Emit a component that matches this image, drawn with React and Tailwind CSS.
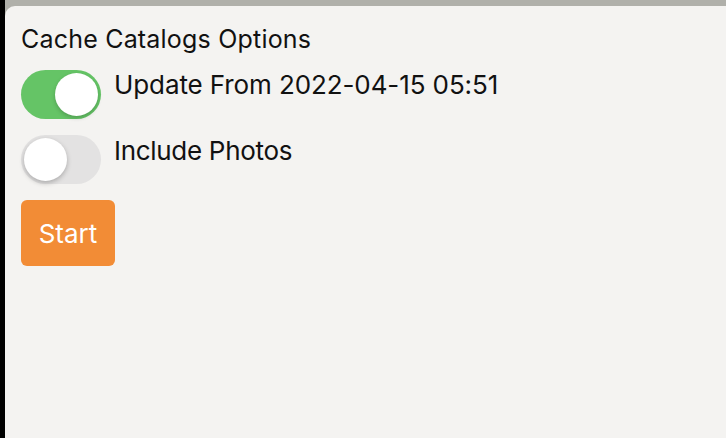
export default function App() {
  return (
    <div className="w-[726px] h-[438px] bg-black flex overflow-hidden" style={{ fontFamily: 'Inter, "Liberation Sans", sans-serif' }}>
      <div className="w-[5px] shrink-0" />
      <div className="flex-1 flex flex-col bg-[#b0b0aa]">
        <div className="h-[6px] shrink-0" />
        <div className="flex-1 bg-[#f4f3f1] rounded-tl-[10px] pl-[16px] pt-[18px] flex flex-col text-[#111]">
          <div className="text-[25px] leading-[30px] tracking-[0.2px]">Cache Catalogs Options</div>
          <div className="flex items-start mt-[16px]">
            <div className="w-[80px] h-[49px] rounded-full bg-[#65c466] p-[3px] flex justify-end">
              <div className="w-[43px] h-[43px] rounded-full bg-white shadow-[0_2px_4px_rgba(0,0,0,0.2)]" />
            </div>
            <div className="ml-[13px] text-[26px] leading-[32px] -mt-[1px] tracking-[-0.1px]">Update From 2022-04-15 05:51</div>
          </div>
          <div className="flex items-start mt-[16px]">
            <div className="w-[80px] h-[49px] rounded-full bg-[#e3e2e2] p-[3px] flex justify-start">
              <div className="w-[43px] h-[43px] rounded-full bg-white shadow-[0_2px_5px_rgba(0,0,0,0.25)]" />
            </div>
            <div className="ml-[13px] text-[26px] leading-[32px] tracking-[-0.3px]">Include Photos</div>
          </div>
          <div className="mt-[16px]">
            <button className="w-[94px] h-[66px] rounded-[6px] bg-[#f28c36] text-white text-[26px] flex items-center justify-center">Start</button>
          </div>
        </div>
      </div>
    </div>
  );
}
